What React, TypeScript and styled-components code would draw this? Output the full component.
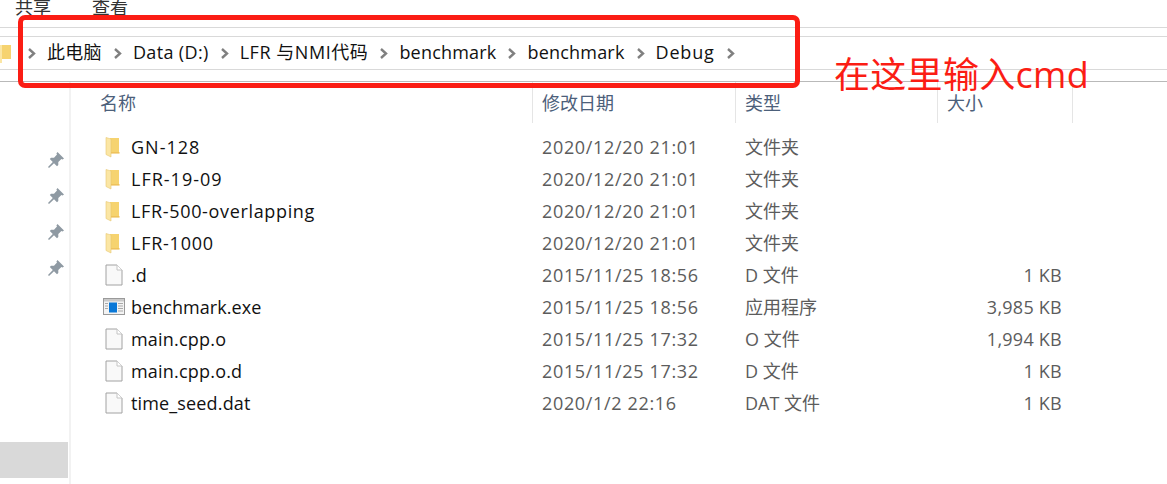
import { Fragment, ReactNode } from 'react'
import styled, { createGlobalStyle } from 'styled-components'

const GlobalStyle = createGlobalStyle`
  html, body {
    margin: 0;
    padding: 0;
    background: #fff;
  }
  body {
    font-family: 'Open Sans', 'Noto Sans CJK SC', sans-serif;
  }
`

const Window = styled.div`
  position: relative;
  width: 1167px;
  height: 484px;
  overflow: hidden;
  background: #fff;
`

const Ribbon = styled.div`
  height: 28px;
  display: flex;
  align-items: flex-start;
  gap: 41px;
  padding-left: 15px;
  box-sizing: border-box;
  border-bottom: 1px solid #d9d9d9;
`

const RibbonTab = styled.span`
  margin-top: -5px;
  font-size: 18px;
  line-height: 24px;
  color: #333;
`

const RibbonGap = styled.div`
  height: 8px;
`

const AddressBar = styled.div`
  height: 34px;
  box-sizing: border-box;
  display: flex;
  align-items: center;
  border-top: 1px solid #d9d9d9;
  border-bottom: 1px solid #d9d9d9;
`

const AddressFolder = styled.svg`
  width: 13px;
  height: 22px;
  margin-left: -1px;
  flex: none;
`

const Crumb = styled.span<{ $spacing: number }>`
  margin-left: 11px;
  margin-top: -2px;
  font-size: 18px;
  line-height: 24px;
  letter-spacing: ${(p) => p.$spacing}px;
  color: #111;
  white-space: nowrap;
`

const ChevronBox = styled.svg<{ $gap: number }>`
  width: 9px;
  height: 11px;
  margin-left: ${(p) => p.$gap}px;
  flex: none;
`

const BarGap = styled.div`
  height: 11px;
  border-bottom: 1px solid #b9b9b9;
`

const Body = styled.div`
  display: flex;
  height: 402px;
`

const Sidebar = styled.div`
  width: 71px;
  flex: none;
  box-sizing: border-box;
  border-right: 2px solid #f2f2f2;
  display: flex;
  flex-direction: column;
`

const Pins = styled.div`
  margin-top: 69px;
  margin-left: 47px;
  display: flex;
  flex-direction: column;
  gap: 18px;
`

const PinIcon = styled.svg`
  width: 18px;
  height: 18px;
  display: block;
`

const SelectedNav = styled.div`
  width: 68px;
  height: 36px;
  margin-top: 165px;
  background: #d9d9d9;
`

const Content = styled.div`
  flex: 1;
  min-width: 0;
`

const columns = 'grid-template-columns: 462px 203px 202px 135px;'

const HeaderRow = styled.div`
  display: grid;
  ${columns}
  height: 41px;
`

const HeaderCell = styled.div<{ $divider?: boolean }>`
  font-size: 18px;
  line-height: 42px;
  height: 41px;
  padding-left: ${(p) => (p.$divider ? 9 : 29)}px;
  color: #4c607a;
  box-sizing: border-box;
  border-right: 1px solid #e5e5e5;
`

const Rows = styled.div`
  margin-top: 8px;
`

const Row = styled.div`
  display: grid;
  ${columns}
  height: 32px;
  align-items: center;
  font-size: 18px;
  line-height: 24px;
`

const NameCell = styled.div<{ $spacing: number }>`
  display: flex;
  align-items: center;
  padding-left: 30px;
  letter-spacing: ${(p) => p.$spacing}px;
  color: #111;
  white-space: nowrap;
`

const IconSlot = styled.div`
  width: 30px;
  height: 24px;
  padding-left: 4px;
  box-sizing: border-box;
  flex: none;
  display: flex;
  align-items: center;
`

const DateCell = styled.div`
  padding-left: 9px;
  letter-spacing: 0.66px;
  color: #5c5c5c;
`

const TypeCell = styled.div`
  padding-left: 9px;
  color: #5c5c5c;
`

const SizeCell = styled.div`
  padding-right: 11px;
  text-align: right;
  letter-spacing: 0.25px;
  color: #5c5c5c;
`

const Callout = styled.div`
  position: absolute;
  left: 18px;
  top: 15px;
  width: 782px;
  height: 73px;
  box-sizing: border-box;
  border: 5px solid #fb1d14;
  border-radius: 7px;
`

const CalloutLabel = styled.div`
  position: absolute;
  left: 834px;
  top: 50px;
  font-size: 36px;
  line-height: 50px;
  letter-spacing: 0.3px;
  color: #fb1d14;
  white-space: nowrap;
`

const Chevron = ({ gap }: { gap: number }) => (
  <ChevronBox $gap={gap} viewBox="0 0 9 11">
    <path d="M2 1 L7 5.5 L2 10" fill="none" stroke="#808080" strokeWidth="2.4" />
  </ChevronBox>
)

const Pin = () => (
  <PinIcon viewBox="0 0 18 18">
    <path
      d="M10.5 1 L17 7.5 L15.6 8.6 L14.4 8 L11.3 11 L11.3 14 L10 15.2 L7 12.2 L2 17 L1 16 L5.8 11 L2.8 8 L4 6.7 L7 6.7 L10 3.6 L9.4 2.4 Z"
      fill="#8f9aa3"
    />
  </PinIcon>
)

const FolderIcon = () => (
  <svg width="15" height="22" viewBox="0 0 15 22">
    <path d="M5 2 H14 V17 H5 Z" fill="#f6d36f" />
    <path d="M1 1.5 L6 3 V21 L1 18.5 Z" fill="#fbe6a4" stroke="#e8c871" strokeWidth="0.6" />
    <path d="M6 16 H14.5 V17.6 H6 Z" fill="#eec25c" />
  </svg>
)

const FileIcon = () => (
  <svg width="18" height="22" viewBox="0 0 18 22">
    <path d="M1 1 H12 L17 6 V21 H1 Z" fill="#f9f9f9" stroke="#a2a2a2" />
    <path d="M12 1 V6 H17" fill="#fff" stroke="#c4c4c4" />
  </svg>
)

const ExeIcon = () => (
  <svg width="22" height="18" viewBox="0 0 22 18" style={{ marginLeft: -2 }}>
    <rect x="0.5" y="0.5" width="21" height="16" fill="#f3f3f3" stroke="#9a9a9a" />
    <rect x="1" y="1" width="20" height="2.5" fill="#c9c9c9" />
    <rect x="6" y="4.5" width="8" height="10" fill="#0a78d7" />
    <path d="M2 5.5 H5 M2 8 H5 M2 10.5 H5 M15 5.5 H20 M15 8 H20 M15 10.5 H20 M15 13 H20" stroke="#a9a9a9" />
  </svg>
)

type RowData = {
  name: string
  spacing: number
  icon: ReactNode
  date: string
  type: string
  size?: string
}

const files: RowData[] = [
  { name: 'GN-128', spacing: 1, icon: <FolderIcon />, date: '2020/12/20 21:01', type: '文件夹' },
  { name: 'LFR-19-09', spacing: 1, icon: <FolderIcon />, date: '2020/12/20 21:01', type: '文件夹' },
  { name: 'LFR-500-overlapping', spacing: 0.66, icon: <FolderIcon />, date: '2020/12/20 21:01', type: '文件夹' },
  { name: 'LFR-1000', spacing: 0.75, icon: <FolderIcon />, date: '2020/12/20 21:01', type: '文件夹' },
  { name: '.d', spacing: 0, icon: <FileIcon />, date: '2015/11/25 18:56', type: 'D 文件', size: '1 KB' },
  { name: 'benchmark.exe', spacing: 0.05, icon: <ExeIcon />, date: '2015/11/25 18:56', type: '应用程序', size: '3,985 KB' },
  { name: 'main.cpp.o', spacing: 0.2, icon: <FileIcon />, date: '2015/11/25 17:32', type: 'O 文件', size: '1,994 KB' },
  { name: 'main.cpp.o.d', spacing: 0.2, icon: <FileIcon />, date: '2015/11/25 17:32', type: 'D 文件', size: '1 KB' },
  { name: 'time_seed.dat', spacing: 0.15, icon: <FileIcon />, date: '2020/1/2 22:16', type: 'DAT 文件', size: '1 KB' },
]

const crumbs = [
  { label: '此电脑', spacing: 0.3 },
  { label: 'Data (D:)', spacing: 0.35 },
  { label: 'LFR 与NMI代码', spacing: 0.55 },
  { label: 'benchmark', spacing: 0.2 },
  { label: 'benchmark', spacing: 0.2 },
  { label: 'Debug', spacing: 0.8 },
]

export default function App() {
  return (
    <Window>
      <GlobalStyle />
      <Ribbon>
        <RibbonTab>共享</RibbonTab>
        <RibbonTab>查看</RibbonTab>
      </Ribbon>
      <RibbonGap />
      <AddressBar>
        <AddressFolder viewBox="0 0 13 22">
          <path d="M0 3 H12 V17 H0 Z" fill="#f6d36f" />
          <path d="M0 3 H3 V21 H0 Z" fill="#fbe6a4" />
        </AddressFolder>
        <Chevron gap={15} />
        {crumbs.map((crumb, i) => (
          <Fragment key={i}>
            <Crumb $spacing={crumb.spacing}>{crumb.label}</Crumb>
            <Chevron gap={11} />
          </Fragment>
        ))}
      </AddressBar>
      <BarGap />
      <Body>
        <Sidebar>
          <Pins>
            <Pin />
            <Pin />
            <Pin />
            <Pin />
          </Pins>
          <SelectedNav />
        </Sidebar>
        <Content>
          <HeaderRow>
            <HeaderCell>名称</HeaderCell>
            <HeaderCell $divider>修改日期</HeaderCell>
            <HeaderCell $divider>类型</HeaderCell>
            <HeaderCell $divider>大小</HeaderCell>
          </HeaderRow>
          <Rows>
            {files.map((file) => (
              <Row key={file.name}>
                <NameCell $spacing={file.spacing}>
                  <IconSlot>{file.icon}</IconSlot>
                  {file.name}
                </NameCell>
                <DateCell>{file.date}</DateCell>
                <TypeCell>{file.type}</TypeCell>
                <SizeCell>{file.size}</SizeCell>
              </Row>
            ))}
          </Rows>
        </Content>
      </Body>
      <Callout />
      <CalloutLabel>在这里输入cmd</CalloutLabel>
    </Window>
  )
}
